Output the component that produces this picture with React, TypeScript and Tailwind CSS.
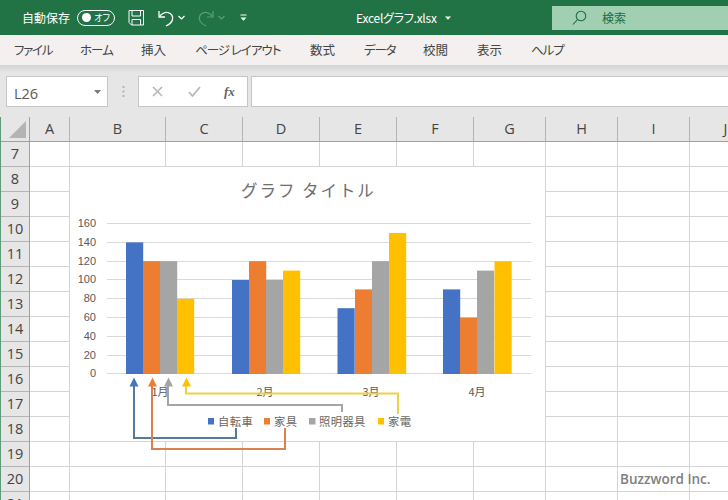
const jp = "font-['Noto_Sans_CJK_JP',sans-serif] [font-feature-settings:'palt']";

const tabs = [
  { t: "ファイル", w: "w-[38px] tracking-[-1.25px]" },
  { t: "ホーム", w: "w-[33px] tracking-[-1px]" },
  { t: "挿入", w: "w-[26px]" },
  { t: "ページ レイアウト", w: "w-[87px] tracking-[-1px]" },
  { t: "数式", w: "w-[26px]" },
  { t: "データ", w: "w-[31px] tracking-[-1.2px]" },
  { t: "校閲", w: "w-[26px]" },
  { t: "表示", w: "w-[26px]" },
  { t: "ヘルプ", w: "w-[32px] tracking-[-1px]" },
];

const cols = [
  { n: "A", w: "w-[40px]" },
  { n: "B", w: "w-[96px]" },
  { n: "C", w: "w-[77px]" },
  { n: "D", w: "w-[77px]" },
  { n: "E", w: "w-[77px]" },
  { n: "F", w: "w-[77px]" },
  { n: "G", w: "w-[72px]" },
  { n: "H", w: "w-[72px]" },
  { n: "I", w: "w-[72px]" },
  { n: "J", w: "w-[72px]" },
];

const rows = [7, 8, 9, 10, 11, 12, 13, 14, 15, 16, 17, 18, 19, 20, 21];

const seriesColors = ["#4472c4", "#ed7d31", "#a5a5a5", "#ffc000"];
const groups = [
  { x: [126, 143, 160, 177], v: [140, 120, 120, 80] },
  { x: [232, 249, 266, 283], v: [100, 120, 100, 110] },
  { x: [337.5, 355, 372, 389], v: [70, 90, 120, 150] },
  { x: [443, 460, 477, 494.5], v: [90, 60, 110, 120] },
];
const zero = 374;
const unit = 0.94;

function Chart() {
  return (
    <svg viewBox="70 167 475 274" className="absolute left-[69px] top-[50px] h-[274px] w-[475px] overflow-visible">
      <rect x="70" y="167" width="475" height="274" fill="white" />
      <g className="font-['Noto_Sans_CJK_JP',sans-serif]" fill="#6e6e6e">
        <text x="241" y="197" fontSize="16.5" letterSpacing="1.95">グラフ タイトル</text>
      </g>
      {[0, 20, 40, 60, 80, 100, 120, 140, 160].map((v) => {
        const y = Math.floor(373.8 - v * unit) + 0.5;
        return (
          <g key={v}>
            <line x1="107" x2="531" y1={y} y2={y} stroke="#d9d9d9" strokeWidth="1" />
            <text x="96" y={y + 3.5} textAnchor="end" fontSize="11" fill="#595959" className="font-['Liberation_Sans',sans-serif]">
              {v}
            </text>
          </g>
        );
      })}
      {groups.map((g, i) =>
        g.v.map((v, j) => (
          <rect key={`${i}-${j}`} x={g.x[j]} y={zero - v * unit} width="17.2" height={v * unit} fill={seriesColors[j]} />
        )),
      )}
      <g fontSize="11" fill="#595959" textAnchor="middle" className="font-['Noto_Sans_CJK_JP',sans-serif]">
        <text x="160" y="396">1月</text>
        <text x="265" y="396">2月</text>
        <text x="371" y="396">3月</text>
        <text x="477" y="396">4月</text>
      </g>
      <g fontSize="11.3" fill="#666666" letterSpacing="0.4" className="font-['Noto_Sans_CJK_JP',sans-serif]">
        <rect x="208" y="418" width="6" height="6.5" fill="#4472c4" />
        <text x="218" y="426">自転車</text>
        <rect x="264" y="418" width="6" height="6.5" fill="#ed7d31" />
        <text x="274" y="426">家具</text>
        <rect x="309" y="418" width="6.5" height="6.5" fill="#a5a5a5" />
        <text x="319" y="426">照明器具</text>
        <rect x="378" y="418" width="6" height="6.5" fill="#ffc000" />
        <text x="388" y="426">家電</text>
      </g>
      <g fill="none" strokeWidth="2">
        <path d="M134 386V438H236V428" stroke="#557a9e" />
        <path d="M152 386V449H285V428" stroke="#d9824f" />
        <path d="M168 386V405H342V412" stroke="#a5a5a5" />
        <path d="M186 386V393.5H398V414" stroke="#ecd04a" />
      </g>
      <path d="M134 377.5l4.5 9h-9z" fill="#4472c4" />
      <path d="M152.5 377.5l4.5 9h-9z" fill="#ed7d31" />
      <path d="M168.5 377.5l4.5 9h-9z" fill="#a5a5a5" />
      <path d="M186.5 377.5l4.5 9h-9z" fill="#ffc000" />
    </svg>
  );
}

export default function App() {
  return (
    <div className="h-[500px] w-[728px] overflow-hidden bg-white font-['Open_Sans',sans-serif]">
      {/* title bar */}
      <div className="flex h-[35px] items-center bg-[#217346] text-white">
        <span className={`ml-[22px] w-[48px] whitespace-nowrap text-[12px] ${jp}`}>自動保存</span>
        <div className="ml-[7px] flex h-[16px] w-[38px] items-center justify-between rounded-full border border-white pl-[4px] pr-[4px]">
          <span className="h-[9px] w-[9px] rounded-full bg-white" />
          <span className={`text-[9px] leading-none ${jp}`}>オフ</span>
        </div>
        <svg className="ml-[13px]" width="17" height="17" viewBox="0 0 17 17" fill="none" stroke="white" strokeWidth="1">
          <path d="M1 1.5H15.5V16H3.5L1 13.5Z" />
          <path d="M4 1.5V7H12.5V1.5M4 16V10.5H12.5V16" />
        </svg>
        <svg className="ml-[12px]" width="18" height="18" viewBox="0 0 18 18" fill="none" stroke="white" strokeWidth="1.3">
          <path d="M2 2V8H8" />
          <path d="M2.3 7.8C5 4.5 8 3 11 3.6C14.5 4.5 16 7.5 15.5 10.5C15 13 13 15 9 17" />
        </svg>
        <svg className="ml-[3px]" width="7" height="5" viewBox="0 0 7 5" fill="none" stroke="white" strokeWidth="1.2">
          <path d="M0.5 1L3.5 4L6.5 1" />
        </svg>
        <svg className="ml-[12px]" width="18" height="18" viewBox="0 0 18 18" fill="none" stroke="#5c9c78" strokeWidth="1.2">
          <path d="M16 2V8H10" />
          <path d="M15.7 7.8C13 4.5 10 3 7 3.6C3.5 4.5 2 7.5 2.5 10.5C3 13 5 15 9 17" />
        </svg>
        <svg className="ml-[3px]" width="7" height="5" viewBox="0 0 7 5" fill="none" stroke="#5c9c78" strokeWidth="1.2">
          <path d="M0.5 1L3.5 4L6.5 1" />
        </svg>
        <svg className="ml-[15px]" width="7" height="8" viewBox="0 0 7 8" fill="white">
          <rect x="0.5" y="0.5" width="6" height="1" />
          <path d="M0.5 3.5H6.5L3.5 6.8Z" />
        </svg>
        <span className={`ml-[109px] w-[82px] whitespace-nowrap text-[12px] tracking-[-0.25px] ${jp}`}>Excelグラフ.xlsx</span>
        <svg className="ml-[7px]" width="6" height="4" viewBox="0 0 6 4" fill="white">
          <path d="M0 0.5H6L3 3.8Z" />
        </svg>
        <div className="ml-auto flex h-[24px] w-[176px] items-center bg-[#a0cfb2] text-[#1d6b42]">
          <svg className="ml-[20px]" width="15" height="15" viewBox="0 0 15 15" fill="none" stroke="#1d6b42" strokeWidth="1.1">
            <circle cx="9" cy="6" r="4.8" />
            <path d="M5.5 9.5L1 14.5" />
          </svg>
          <span className={`ml-[15px] text-[12px] ${jp}`}>検索</span>
        </div>
      </div>

      {/* ribbon tabs */}
      <div className={`flex h-[30px] items-center gap-[28px] bg-[#f3f0ef] pl-[14px] text-[12.5px] text-[#444444] ${jp}`}>
        {tabs.map((tab) => (
          <span key={tab.t} className={`${tab.w} whitespace-nowrap`}>
            {tab.t}
          </span>
        ))}
      </div>

      {/* formula bar */}
      <div className="h-[52px] bg-[#e6e6e6] bg-[linear-gradient(#d4d4d4,#e6e6e6_8px)] pt-[11px]">
        <div className="flex h-[31px] items-stretch pl-[6px]">
          <div className="flex w-[102px] items-center justify-between border border-[#c6c6c6] bg-white pl-[7px] pr-[6px] text-[#5a5a5a]">
            <span className="pt-[5px] text-[14.5px]">L26</span>
            <svg width="7" height="4" viewBox="0 0 7 4" fill="#7a7a7a">
              <path d="M0 0H7L3.5 4Z" />
            </svg>
          </div>
          <div className="flex w-[30px] items-center justify-center">
            <svg width="3" height="11" viewBox="0 0 3 11" fill="#b5b5b5">
              <rect x="0.5" y="0" width="2" height="2" />
              <rect x="0.5" y="4.5" width="2" height="2" />
              <rect x="0.5" y="9" width="2" height="2" />
            </svg>
          </div>
          <div className="flex w-[110px] items-center border border-[#c6c6c6] bg-white">
            <svg className="ml-[13px]" width="11" height="11" viewBox="0 0 11 11" fill="none" stroke="#b8b8b8" strokeWidth="1.6">
              <path d="M1 1L10 10M10 1L1 10" />
            </svg>
            <svg className="ml-[25px]" width="13" height="11" viewBox="0 0 13 11" fill="none" stroke="#b8b8b8" strokeWidth="1.8">
              <path d="M1 6L4.5 10L12 1" />
            </svg>
            <span className="ml-[23px] font-['Liberation_Serif',serif] text-[13px] font-bold italic text-[#666666]">fx</span>
          </div>
          <div className="ml-[3px] flex-1 border-y border-l border-[#c6c6c6] bg-white" />
        </div>
      </div>

      {/* sheet */}
      <div className="relative border-l border-[#5f9a78]">
        <div className="flex h-[25px] bg-[#e6e6e6] text-[14.5px] text-[#444444]">
          <div className="relative w-[29px] shrink-0 border-r border-b border-[#a0a0a0]">
            <svg className="absolute left-[8px] top-[4px]" width="17" height="17" viewBox="0 0 17 17" fill="#b4b4b4">
              <path d="M17 0V17H0Z" />
            </svg>
          </div>
          {cols.map((c) => (
            <div key={c.n} className={`${c.w} flex shrink-0 items-center justify-center border-r border-b border-r-[#b4b4b4] border-b-[#a0a0a0]`}>
              {c.n}
            </div>
          ))}
        </div>
        {rows.map((r) => (
          <div key={r} className="flex h-[25px]">
            <div className="flex w-[29px] shrink-0 items-center justify-center border-r border-b border-r-[#a0a0a0] border-b-[#b4b4b4] bg-[#e6e6e6] text-[14.5px] text-[#444444]">
              {r}
            </div>
            {cols.map((c) => (
              <div key={c.n} className={`${c.w} shrink-0 border-r border-b border-[#d4d4d4]`} />
            ))}
          </div>
        ))}
        <Chart />
        <span className="absolute left-[619px] top-[352px] text-[13.5px] font-semibold text-[#808080]">
          Buzzword Inc.
        </span>
      </div>
    </div>
  );
}
